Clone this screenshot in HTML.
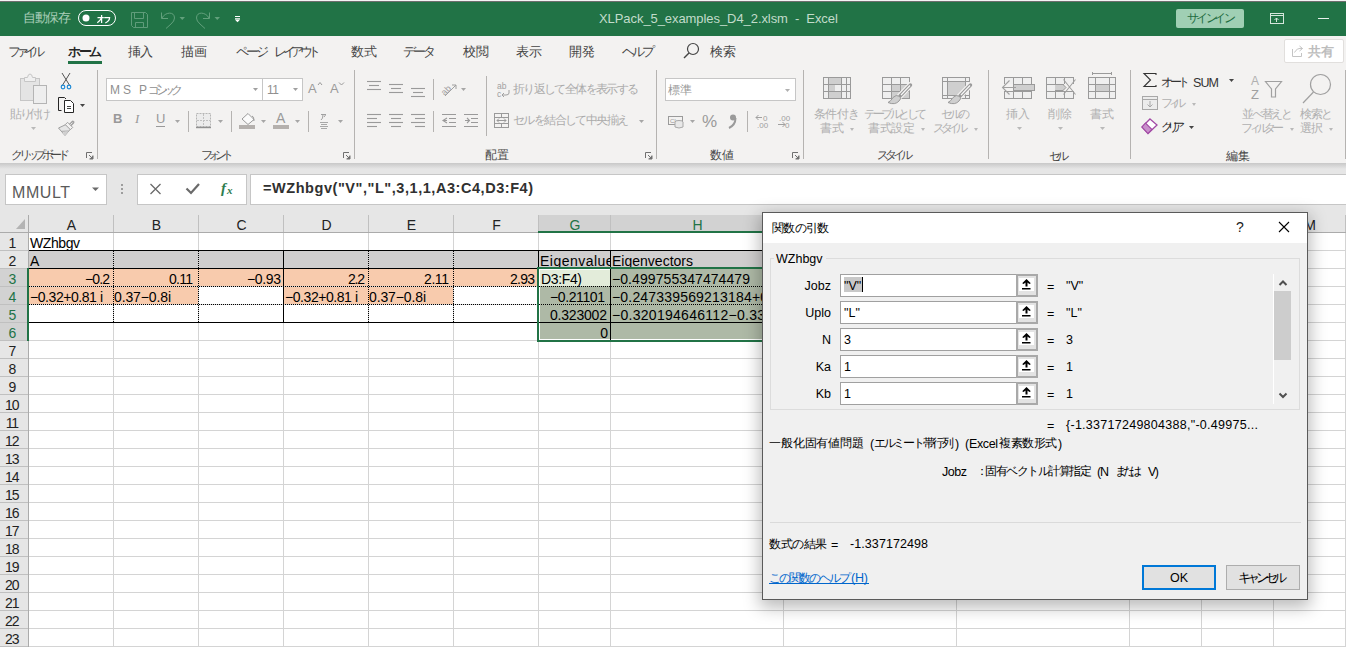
<!DOCTYPE html>
<html><head><meta charset="utf-8">
<style>
*{box-sizing:border-box;margin:0;padding:0}
html,body{width:1346px;height:647px;overflow:hidden;background:#fff;font-family:"Liberation Sans",sans-serif;position:relative}
.a{position:absolute}
.t{position:absolute;white-space:nowrap;line-height:1}
svg{position:absolute;overflow:visible}
</style></head><body>
<div class="a" style="left:29px;top:233px;width:1317px;height:414px;background:#fff"></div>
<div class="a" style="left:29px;top:250px;width:1317px;height:1px;background:#d4d4d4"></div>
<div class="a" style="left:29px;top:268px;width:1317px;height:1px;background:#d4d4d4"></div>
<div class="a" style="left:29px;top:286px;width:1317px;height:1px;background:#d4d4d4"></div>
<div class="a" style="left:29px;top:304px;width:1317px;height:1px;background:#d4d4d4"></div>
<div class="a" style="left:29px;top:322px;width:1317px;height:1px;background:#d4d4d4"></div>
<div class="a" style="left:29px;top:340px;width:1317px;height:1px;background:#d4d4d4"></div>
<div class="a" style="left:29px;top:358px;width:1317px;height:1px;background:#d4d4d4"></div>
<div class="a" style="left:29px;top:376px;width:1317px;height:1px;background:#d4d4d4"></div>
<div class="a" style="left:29px;top:394px;width:1317px;height:1px;background:#d4d4d4"></div>
<div class="a" style="left:29px;top:412px;width:1317px;height:1px;background:#d4d4d4"></div>
<div class="a" style="left:29px;top:430px;width:1317px;height:1px;background:#d4d4d4"></div>
<div class="a" style="left:29px;top:448px;width:1317px;height:1px;background:#d4d4d4"></div>
<div class="a" style="left:29px;top:466px;width:1317px;height:1px;background:#d4d4d4"></div>
<div class="a" style="left:29px;top:484px;width:1317px;height:1px;background:#d4d4d4"></div>
<div class="a" style="left:29px;top:502px;width:1317px;height:1px;background:#d4d4d4"></div>
<div class="a" style="left:29px;top:520px;width:1317px;height:1px;background:#d4d4d4"></div>
<div class="a" style="left:29px;top:538px;width:1317px;height:1px;background:#d4d4d4"></div>
<div class="a" style="left:29px;top:556px;width:1317px;height:1px;background:#d4d4d4"></div>
<div class="a" style="left:29px;top:574px;width:1317px;height:1px;background:#d4d4d4"></div>
<div class="a" style="left:29px;top:592px;width:1317px;height:1px;background:#d4d4d4"></div>
<div class="a" style="left:29px;top:610px;width:1317px;height:1px;background:#d4d4d4"></div>
<div class="a" style="left:29px;top:628px;width:1317px;height:1px;background:#d4d4d4"></div>
<div class="a" style="left:29px;top:646px;width:1317px;height:1px;background:#d4d4d4"></div>
<div class="a" style="left:113px;top:233px;width:1px;height:414px;background:#d4d4d4"></div>
<div class="a" style="left:198px;top:233px;width:1px;height:414px;background:#d4d4d4"></div>
<div class="a" style="left:283px;top:233px;width:1px;height:414px;background:#d4d4d4"></div>
<div class="a" style="left:368px;top:233px;width:1px;height:414px;background:#d4d4d4"></div>
<div class="a" style="left:453px;top:233px;width:1px;height:414px;background:#d4d4d4"></div>
<div class="a" style="left:538px;top:233px;width:1px;height:414px;background:#d4d4d4"></div>
<div class="a" style="left:610px;top:233px;width:1px;height:414px;background:#d4d4d4"></div>
<div class="a" style="left:783px;top:233px;width:1px;height:414px;background:#d4d4d4"></div>
<div class="a" style="left:956px;top:233px;width:1px;height:414px;background:#d4d4d4"></div>
<div class="a" style="left:1129px;top:233px;width:1px;height:414px;background:#d4d4d4"></div>
<div class="a" style="left:1201px;top:233px;width:1px;height:414px;background:#d4d4d4"></div>
<div class="a" style="left:1273px;top:233px;width:1px;height:414px;background:#d4d4d4"></div>
<div class="a" style="left:1345px;top:233px;width:1px;height:414px;background:#d4d4d4"></div>
<div class="a" style="left:29px;top:251px;width:509px;height:17px;background:#d0cece"></div>
<div class="a" style="left:539px;top:251px;width:244px;height:17px;background:#d0cece"></div>
<div class="a" style="left:29px;top:269px;width:509px;height:17px;background:#f8cbad"></div>
<div class="a" style="left:29px;top:287px;width:169px;height:17px;background:#f8cbad"></div>
<div class="a" style="left:284px;top:287px;width:169px;height:17px;background:#f8cbad"></div>
<div class="a" style="left:539px;top:269px;width:244px;height:72px;background:#aeb9a6"></div>
<div class="a" style="left:539px;top:269px;width:71px;height:17px;background:#e3ecda;border-left:1px solid #fff;border-top:1px solid #fff"></div>
<div class="a" style="left:539px;top:339px;width:244px;height:1px;background:#fff"></div>
<div class="a" style="left:539px;top:286px;width:1px;height:54px;background:#fff"></div>
<div class="a" style="left:28px;top:250px;width:755px;height:1px;background:#000"></div>
<div class="a" style="left:28px;top:268px;width:755px;height:1px;background:#000"></div>
<div class="a" style="left:28px;top:322px;width:755px;height:1px;background:#000"></div>
<div class="a" style="left:283px;top:250px;width:1px;height:73px;background:#000"></div>
<div class="a" style="left:538px;top:250px;width:1px;height:91px;background:#000"></div>
<div class="a" style="left:610px;top:250px;width:1px;height:91px;background:#000"></div>
<div class="a" style="left:29px;top:286px;width:509px;height:1px;background:repeating-linear-gradient(90deg,#000 0 1px,transparent 1px 2px)"></div>
<div class="a" style="left:29px;top:304px;width:509px;height:1px;background:repeating-linear-gradient(90deg,#000 0 1px,transparent 1px 2px)"></div>
<div class="a" style="left:539px;top:286px;width:244px;height:1px;background:repeating-linear-gradient(90deg,#000 0 1px,transparent 1px 2px)"></div>
<div class="a" style="left:539px;top:304px;width:244px;height:1px;background:repeating-linear-gradient(90deg,#000 0 1px,transparent 1px 2px)"></div>
<div class="a" style="left:113px;top:251px;width:1px;height:71px;background:repeating-linear-gradient(180deg,#000 0 1px,transparent 1px 2px)"></div>
<div class="a" style="left:198px;top:251px;width:1px;height:71px;background:repeating-linear-gradient(180deg,#000 0 1px,transparent 1px 2px)"></div>
<div class="a" style="left:368px;top:251px;width:1px;height:71px;background:repeating-linear-gradient(180deg,#000 0 1px,transparent 1px 2px)"></div>
<div class="a" style="left:453px;top:251px;width:1px;height:71px;background:repeating-linear-gradient(180deg,#000 0 1px,transparent 1px 2px)"></div>
<div class="t" style="left:30px;top:236px;font-size:14px;color:#000;letter-spacing:-0.42px">WZhbgv</div>
<div class="t" style="left:30px;top:254px;font-size:14px;color:#000;letter-spacing:0.00px">A</div>
<div class="t" style="left:-90.88px;top:272px;width:200px;text-align:right;font-size:14px;color:#000;letter-spacing:-0.88px">−0.2</div>
<div class="t" style="left:-7.74px;top:272px;width:200px;text-align:right;font-size:14px;color:#000;letter-spacing:-0.74px">0.11</div>
<div class="t" style="left:80.64px;top:272px;width:200px;text-align:right;font-size:14px;color:#000;letter-spacing:-0.36px">−0.93</div>
<div class="t" style="left:163.77px;top:272px;width:200px;text-align:right;font-size:14px;color:#000;letter-spacing:-1.23px">2.2</div>
<div class="t" style="left:248.59px;top:272px;width:200px;text-align:right;font-size:14px;color:#000;letter-spacing:-0.41px">2.11</div>
<div class="t" style="left:334.25px;top:272px;width:200px;text-align:right;font-size:14px;color:#000;letter-spacing:-0.75px">2.93</div>
<div class="t" style="left:30px;top:290px;font-size:14px;color:#000;letter-spacing:-0.44px">−0.32+0.81 i</div>
<div class="t" style="left:114px;top:290px;font-size:14px;color:#000;letter-spacing:-0.12px">0.37−0.8i</div>
<div class="t" style="left:285px;top:290px;font-size:14px;color:#000;letter-spacing:-0.44px">−0.32+0.81 i</div>
<div class="t" style="left:369px;top:290px;font-size:14px;color:#000;letter-spacing:-0.12px">0.37−0.8i</div>
<div class="a" style="left:540px;top:251px;width:70px;height:17px;overflow:hidden"><div class="t" style="left:0px;top:3px;font-size:14px;color:#000;letter-spacing:0.47px">Eigenvalues</div></div>
<div class="a" style="left:612px;top:251px;width:171px;height:17px;overflow:hidden"><div class="t" style="left:0px;top:3px;font-size:14px;color:#000;letter-spacing:0.01px">Eigenvectors</div></div>
<div class="t" style="left:541px;top:272px;font-size:14px;color:#000;letter-spacing:-0.36px">D3:F4)</div>
<div class="t" style="left:404.61px;top:290px;width:200px;text-align:right;font-size:14px;color:#000;letter-spacing:-0.39px">−0.21101</div>
<div class="t" style="left:406.80px;top:308px;width:200px;text-align:right;font-size:14px;color:#000;letter-spacing:-0.20px">0.323002</div>
<div class="t" style="left:408.00px;top:326px;width:200px;text-align:right;font-size:14px;color:#000;letter-spacing:0.00px">0</div>
<div class="t" style="left:612px;top:272px;font-size:14px;color:#000;letter-spacing:0.08px">−0.499755347474479</div>
<div class="a" style="left:612px;top:287px;width:171px;height:17px;overflow:hidden"><div class="t" style="left:0px;top:3px;font-size:14px;color:#000;letter-spacing:0.18px">−0.247339569213184+0.339</div></div>
<div class="a" style="left:612px;top:305px;width:171px;height:17px;overflow:hidden"><div class="t" style="left:0px;top:3px;font-size:14px;color:#000;letter-spacing:0.28px">−0.320194646112−0.338</div></div>
<div class="a" style="left:537px;top:267px;width:247px;height:2px;background:#217346"></div>
<div class="a" style="left:537px;top:340px;width:247px;height:2px;background:#217346"></div>
<div class="a" style="left:537px;top:267px;width:2px;height:75px;background:#217346"></div>
<div class="a" style="left:0px;top:215px;width:1346px;height:18px;background:#e6e6e6"></div>
<div class="a" style="left:538px;top:215px;width:245px;height:17px;background:#d2d2d2"></div>
<div class="a" style="left:0px;top:233px;width:28px;height:414px;background:#e6e6e6"></div>
<div class="a" style="left:0px;top:269px;width:28px;height:72px;background:#d2d2d2"></div>
<div class="a" style="left:0px;top:250px;width:28px;height:1px;background:#c0c0c0"></div>
<div class="a" style="left:0px;top:268px;width:28px;height:1px;background:#c0c0c0"></div>
<div class="a" style="left:0px;top:286px;width:28px;height:1px;background:#c0c0c0"></div>
<div class="a" style="left:0px;top:304px;width:28px;height:1px;background:#c0c0c0"></div>
<div class="a" style="left:0px;top:322px;width:28px;height:1px;background:#c0c0c0"></div>
<div class="a" style="left:0px;top:340px;width:28px;height:1px;background:#c0c0c0"></div>
<div class="a" style="left:0px;top:358px;width:28px;height:1px;background:#c0c0c0"></div>
<div class="a" style="left:0px;top:376px;width:28px;height:1px;background:#c0c0c0"></div>
<div class="a" style="left:0px;top:394px;width:28px;height:1px;background:#c0c0c0"></div>
<div class="a" style="left:0px;top:412px;width:28px;height:1px;background:#c0c0c0"></div>
<div class="a" style="left:0px;top:430px;width:28px;height:1px;background:#c0c0c0"></div>
<div class="a" style="left:0px;top:448px;width:28px;height:1px;background:#c0c0c0"></div>
<div class="a" style="left:0px;top:466px;width:28px;height:1px;background:#c0c0c0"></div>
<div class="a" style="left:0px;top:484px;width:28px;height:1px;background:#c0c0c0"></div>
<div class="a" style="left:0px;top:502px;width:28px;height:1px;background:#c0c0c0"></div>
<div class="a" style="left:0px;top:520px;width:28px;height:1px;background:#c0c0c0"></div>
<div class="a" style="left:0px;top:538px;width:28px;height:1px;background:#c0c0c0"></div>
<div class="a" style="left:0px;top:556px;width:28px;height:1px;background:#c0c0c0"></div>
<div class="a" style="left:0px;top:574px;width:28px;height:1px;background:#c0c0c0"></div>
<div class="a" style="left:0px;top:592px;width:28px;height:1px;background:#c0c0c0"></div>
<div class="a" style="left:0px;top:610px;width:28px;height:1px;background:#c0c0c0"></div>
<div class="a" style="left:0px;top:628px;width:28px;height:1px;background:#c0c0c0"></div>
<div class="a" style="left:0px;top:646px;width:28px;height:1px;background:#c0c0c0"></div>
<div class="a" style="left:113px;top:215px;width:1px;height:17px;background:#c0c0c0"></div>
<div class="a" style="left:198px;top:215px;width:1px;height:17px;background:#c0c0c0"></div>
<div class="a" style="left:283px;top:215px;width:1px;height:17px;background:#c0c0c0"></div>
<div class="a" style="left:368px;top:215px;width:1px;height:17px;background:#c0c0c0"></div>
<div class="a" style="left:453px;top:215px;width:1px;height:17px;background:#c0c0c0"></div>
<div class="a" style="left:538px;top:215px;width:1px;height:17px;background:#c0c0c0"></div>
<div class="a" style="left:610px;top:215px;width:1px;height:17px;background:#c0c0c0"></div>
<div class="a" style="left:783px;top:215px;width:1px;height:17px;background:#c0c0c0"></div>
<div class="a" style="left:956px;top:215px;width:1px;height:17px;background:#c0c0c0"></div>
<div class="a" style="left:1129px;top:215px;width:1px;height:17px;background:#c0c0c0"></div>
<div class="a" style="left:1201px;top:215px;width:1px;height:17px;background:#c0c0c0"></div>
<div class="a" style="left:1273px;top:215px;width:1px;height:17px;background:#c0c0c0"></div>
<div class="a" style="left:1345px;top:215px;width:1px;height:17px;background:#c0c0c0"></div>
<div class="a" style="left:0px;top:232px;width:1346px;height:1px;background:#ababab"></div>
<div class="a" style="left:28px;top:215px;width:1px;height:432px;background:#ababab"></div>
<svg style="left:0px;top:0px" width="1" height="1"><path d="M16 229 L25 229 L25 219 Z" fill="#b4b4b4"/></svg>
<div class="t" style="left:29px;top:218px;width:85px;text-align:center;font-size:14px;color:#222">A</div>
<div class="t" style="left:114px;top:218px;width:85px;text-align:center;font-size:14px;color:#222">B</div>
<div class="t" style="left:199px;top:218px;width:85px;text-align:center;font-size:14px;color:#222">C</div>
<div class="t" style="left:284px;top:218px;width:85px;text-align:center;font-size:14px;color:#222">D</div>
<div class="t" style="left:369px;top:218px;width:85px;text-align:center;font-size:14px;color:#222">E</div>
<div class="t" style="left:454px;top:218px;width:85px;text-align:center;font-size:14px;color:#222">F</div>
<div class="t" style="left:539px;top:218px;width:72px;text-align:center;font-size:14px;color:#217346">G</div>
<div class="t" style="left:611px;top:218px;width:173px;text-align:center;font-size:14px;color:#217346">H</div>
<div class="t" style="left:784px;top:218px;width:173px;text-align:center;font-size:14px;color:#222">I</div>
<div class="t" style="left:957px;top:218px;width:173px;text-align:center;font-size:14px;color:#222">J</div>
<div class="t" style="left:1130px;top:218px;width:72px;text-align:center;font-size:14px;color:#222">K</div>
<div class="t" style="left:1202px;top:218px;width:72px;text-align:center;font-size:14px;color:#222">L</div>
<div class="t" style="left:1274px;top:218px;width:72px;text-align:center;font-size:14px;color:#222">M</div>
<div class="a" style="left:538px;top:231px;width:245px;height:2px;background:#217346"></div>
<div class="t" style="left:-2px;top:236px;width:28px;text-align:center;font-size:14px;letter-spacing:-1.2px;text-indent:-0.6px;color:#222">1</div>
<div class="t" style="left:-2px;top:254px;width:28px;text-align:center;font-size:14px;letter-spacing:-1.2px;text-indent:-0.6px;color:#222">2</div>
<div class="t" style="left:-2px;top:272px;width:28px;text-align:center;font-size:14px;letter-spacing:-1.2px;text-indent:-0.6px;color:#217346">3</div>
<div class="t" style="left:-2px;top:290px;width:28px;text-align:center;font-size:14px;letter-spacing:-1.2px;text-indent:-0.6px;color:#217346">4</div>
<div class="t" style="left:-2px;top:308px;width:28px;text-align:center;font-size:14px;letter-spacing:-1.2px;text-indent:-0.6px;color:#217346">5</div>
<div class="t" style="left:-2px;top:326px;width:28px;text-align:center;font-size:14px;letter-spacing:-1.2px;text-indent:-0.6px;color:#217346">6</div>
<div class="t" style="left:-2px;top:344px;width:28px;text-align:center;font-size:14px;letter-spacing:-1.2px;text-indent:-0.6px;color:#222">7</div>
<div class="t" style="left:-2px;top:362px;width:28px;text-align:center;font-size:14px;letter-spacing:-1.2px;text-indent:-0.6px;color:#222">8</div>
<div class="t" style="left:-2px;top:380px;width:28px;text-align:center;font-size:14px;letter-spacing:-1.2px;text-indent:-0.6px;color:#222">9</div>
<div class="t" style="left:-2px;top:398px;width:28px;text-align:center;font-size:14px;letter-spacing:-1.2px;text-indent:-0.6px;color:#222">10</div>
<div class="t" style="left:-2px;top:416px;width:28px;text-align:center;font-size:14px;letter-spacing:-1.2px;text-indent:-0.6px;color:#222">11</div>
<div class="t" style="left:-2px;top:434px;width:28px;text-align:center;font-size:14px;letter-spacing:-1.2px;text-indent:-0.6px;color:#222">12</div>
<div class="t" style="left:-2px;top:452px;width:28px;text-align:center;font-size:14px;letter-spacing:-1.2px;text-indent:-0.6px;color:#222">13</div>
<div class="t" style="left:-2px;top:470px;width:28px;text-align:center;font-size:14px;letter-spacing:-1.2px;text-indent:-0.6px;color:#222">14</div>
<div class="t" style="left:-2px;top:488px;width:28px;text-align:center;font-size:14px;letter-spacing:-1.2px;text-indent:-0.6px;color:#222">15</div>
<div class="t" style="left:-2px;top:506px;width:28px;text-align:center;font-size:14px;letter-spacing:-1.2px;text-indent:-0.6px;color:#222">16</div>
<div class="t" style="left:-2px;top:524px;width:28px;text-align:center;font-size:14px;letter-spacing:-1.2px;text-indent:-0.6px;color:#222">17</div>
<div class="t" style="left:-2px;top:542px;width:28px;text-align:center;font-size:14px;letter-spacing:-1.2px;text-indent:-0.6px;color:#222">18</div>
<div class="t" style="left:-2px;top:560px;width:28px;text-align:center;font-size:14px;letter-spacing:-1.2px;text-indent:-0.6px;color:#222">19</div>
<div class="t" style="left:-2px;top:578px;width:28px;text-align:center;font-size:14px;letter-spacing:-1.2px;text-indent:-0.6px;color:#222">20</div>
<div class="t" style="left:-2px;top:596px;width:28px;text-align:center;font-size:14px;letter-spacing:-1.2px;text-indent:-0.6px;color:#222">21</div>
<div class="t" style="left:-2px;top:614px;width:28px;text-align:center;font-size:14px;letter-spacing:-1.2px;text-indent:-0.6px;color:#222">22</div>
<div class="t" style="left:-2px;top:632px;width:28px;text-align:center;font-size:14px;letter-spacing:-1.2px;text-indent:-0.6px;color:#222">23</div>
<div class="a" style="left:27px;top:268px;width:2px;height:73px;background:#217346"></div>
<div class="a" style="left:0px;top:163px;width:1346px;height:52px;background:#e6e6e6"></div>
<div class="a" style="left:0px;top:163px;width:1346px;height:6px;background:linear-gradient(#c8c8c8,#e6e6e6)"></div>
<div class="a" style="left:5px;top:174px;width:102px;height:31px;background:#fff;border:1px solid #c6c6c6"></div>
<div class="t" style="left:12px;top:185px;font-size:16px;color:#5a5a5a;letter-spacing:0.57px;">MMULT</div>
<svg style="left:0px;top:0px" width="1" height="1"><path d="M92 187.5 H99 L95.5 191 Z" fill="#6a6a6a"/></svg>
<svg style="left:0px;top:0px" width="1" height="1"><rect x="121" y="184" width="2" height="2" fill="#9d9d9d"/><rect x="121" y="188" width="2" height="2" fill="#9d9d9d"/><rect x="121" y="192" width="2" height="2" fill="#9d9d9d"/></svg>
<div class="a" style="left:137px;top:174px;width:110px;height:31px;background:#fff;border:1px solid #c6c6c6"></div>
<svg style="left:0px;top:0px" width="1" height="1"><path d="M150.5 184 L160.5 194 M160.5 184 L150.5 194" stroke="#6a6a6a" stroke-width="1.3"/></svg>
<svg style="left:0px;top:0px" width="1" height="1"><path d="M186.5 188.5 L191 193 L199 184" fill="none" stroke="#6a6a6a" stroke-width="2.2"/></svg>
<div class="t" style="left:221px;top:181px;font-size:15px;color:#2d7d4f;font-weight:bold;font-family:'Liberation Serif',serif;font-style:italic">f</div>
<div class="t" style="left:227px;top:185px;font-size:11px;color:#2d7d4f;font-weight:bold;font-family:'Liberation Serif',serif;font-style:italic">x</div>
<div class="a" style="left:250px;top:174px;width:1100px;height:31px;background:#fff;border:1px solid #c6c6c6"></div>
<div class="t" style="left:263px;top:181px;font-size:14.5px;color:#303030;font-weight:bold;letter-spacing:0.55px;">=WZhbgv(&quot;V&quot;,&quot;L&quot;,3,1,1,A3:C4,D3:F4)</div>
<div class="a" style="left:0px;top:36px;width:1346px;height:127px;background:#f3f2f1"></div>
<div class="t" style="left:8px;top:46px;font-size:12.5px;color:#444444;letter-spacing:-5.00px;">ファイル</div>
<div class="t" style="left:68px;top:46px;font-size:12.5px;color:#262626;font-weight:bold;letter-spacing:-2.50px;">ホーム</div>
<div class="t" style="left:128px;top:46px;font-size:12.5px;color:#444444;letter-spacing:-1.00px;">挿入</div>
<div class="t" style="left:181px;top:46px;font-size:12.5px;color:#444444;">描画</div>
<div class="t" style="left:236px;top:46px;font-size:12.5px;color:#444444;letter-spacing:-3.00px;">ページ</div>
<div class="t" style="left:274px;top:46px;font-size:12.5px;color:#444444;letter-spacing:-4.50px;">レイアウト</div>
<div class="t" style="left:351px;top:46px;font-size:12.5px;color:#444444;">数式</div>
<div class="t" style="left:403px;top:46px;font-size:12.5px;color:#444444;letter-spacing:-3.00px;">データ</div>
<div class="t" style="left:463px;top:46px;font-size:12.5px;color:#444444;">校閲</div>
<div class="t" style="left:516px;top:46px;font-size:12.5px;color:#444444;">表示</div>
<div class="t" style="left:569px;top:46px;font-size:12.5px;color:#444444;">開発</div>
<div class="t" style="left:622px;top:46px;font-size:12.5px;color:#444444;letter-spacing:-3.00px;">ヘルプ</div>
<div class="t" style="left:710px;top:46px;font-size:12.5px;color:#444444;">検索</div>
<div class="a" style="left:68px;top:61px;width:34px;height:3px;background:#217346"></div>
<svg style="left:0px;top:0px" width="1" height="1"><circle cx="693" cy="49" r="5.5" fill="none" stroke="#444" stroke-width="1.2"/><path d="M689 53 L684 58" stroke="#444" stroke-width="1.4"/></svg>
<div class="a" style="left:1284px;top:39px;width:60px;height:24px;background:#fff;border:1px solid #e1dfdd;border-radius:2px"></div>
<svg style="left:0px;top:0px" width="1" height="1"><path d="M1292.5 49 V56.5 H1301.5 V53" fill="none" stroke="#c4c4c4"/><path d="M1294.5 52.5 Q1297 47.5 1302.5 48.5 M1299.5 46 L1302.5 48.5 L1299.5 51" fill="none" stroke="#c4c4c4"/></svg>
<div class="t" style="left:1308px;top:46px;font-size:12.5px;color:#bdbdbd;font-weight:bold;">共有</div>
<svg style="left:0px;top:0px" width="1" height="1"><rect x="20.5" y="78.5" width="19" height="22" fill="#e4e4e4" stroke="#c6c6c6"/><path d="M24.5 81.5 V77.5 H27.5 Q28 74 30 74 Q32 74 32.5 77.5 H35.5 V81.5 Z" fill="#f0f0f0" stroke="#c6c6c6"/><rect x="33.5" y="85.5" width="13" height="18" fill="#eeeeee" stroke="#b4b4b4"/></svg>
<div class="t" style="left:10px;top:108px;font-size:12px;color:#b0b0b0;letter-spacing:-2.33px;">貼り付け</div>
<svg style="left:0px;top:0px" width="1" height="1"><path d="M31 127 H36 L33.5 130 Z" fill="#b9b9b9"/></svg>
<svg style="left:0px;top:0px" width="1" height="1"><path d="M62 73 L70 86 M70 73 L62 86" stroke="#555" stroke-width="1"/><circle cx="63" cy="87" r="1.8" fill="none" stroke="#1e8ad6" stroke-width="1.2"/><circle cx="69" cy="87" r="1.8" fill="none" stroke="#1e8ad6" stroke-width="1.2"/></svg>
<svg style="left:0px;top:0px" width="1" height="1"><path d="M61.5 110.5 H58.5 V97.5 H64.5 L66 99" fill="none" stroke="#262626"/><path d="M64.5 100.5 H70.5 L73.5 103.5 V112.5 H64.5 Z" fill="#fff" stroke="#262626"/><path d="M67 106.5 H71 M67 108.5 H71" stroke="#444"/></svg>
<svg style="left:0px;top:0px" width="1" height="1"><path d="M80 104 H85 L82.5 107 Z" fill="#444"/></svg>
<svg style="left:0px;top:0px" width="1" height="1"><path d="M72.8 122.3 L69.8 125.3" stroke="#a0a0a0" stroke-width="3.2" stroke-linecap="round"/><path d="M72.6 122.5 L70 125.1" stroke="#f3f2f1" stroke-width="1"/><path d="M66 124.5 L70.5 129 L65 135.5 L58.5 128 Z" fill="#e6e6e6" stroke="#a0a0a0"/><path d="M61.5 131.3 L68.5 131" stroke="#a8a8a8"/><path d="M65.5 131.5 L62 133 L65 135.5 L68.5 131.5 Z" fill="#d0d0d0"/><path d="M65.3 124.6 L67.6 122.3 L72.7 127.4 L70.4 129.7 Z" fill="#f3f2f1" stroke="#a0a0a0"/></svg>
<div class="t" style="left:11px;top:150px;font-size:11.5px;color:#474747;letter-spacing:-4.17px;">クリップボード</div>
<svg style="left:0px;top:0px" width="1" height="1"><path d="M86.5 158 V152.5 H92" fill="none" stroke="#707070"/><path d="M89 155 L93 159 M93 155.5 V159 H89.5" fill="#707070" stroke="#707070"/></svg>
<div class="a" style="left:97px;top:70px;width:1px;height:89px;background:#b5b3b1"></div>
<div class="a" style="left:106px;top:78px;width:157px;height:23px;background:#fff;border:1px solid #c6c6c6"></div>
<div class="t" style="left:110px;top:84px;font-size:12px;color:#8f8f8f;letter-spacing:3.00px;">MS</div>
<div class="t" style="left:139px;top:84px;font-size:12px;color:#8f8f8f;">P</div>
<div class="t" style="left:148px;top:84px;font-size:12px;color:#8f8f8f;letter-spacing:-4.33px;">ゴシック</div>
<svg style="left:0px;top:0px" width="1" height="1"><path d="M253 88 H258 L255.5 91 Z" fill="#a0a0a0"/></svg>
<div class="a" style="left:262px;top:78px;width:41px;height:23px;background:#fff;border:1px solid #c6c6c6"></div>
<div class="t" style="left:267px;top:84px;font-size:12px;color:#8f8f8f;letter-spacing:-0.47px;">11</div>
<svg style="left:0px;top:0px" width="1" height="1"><path d="M293 88 H298 L295.5 91 Z" fill="#a0a0a0"/></svg>
<div class="t" style="left:308px;top:82px;font-size:13px;color:#9a9a9a;">A</div>
<svg style="left:0px;top:0px" width="1" height="1"><path d="M318 85 L320 82.5 L322 85" fill="none" stroke="#9a9a9a"/></svg>
<div class="t" style="left:330px;top:82px;font-size:13px;color:#9a9a9a;">A</div>
<svg style="left:0px;top:0px" width="1" height="1"><path d="M339 82.5 L341.5 85 L344 82.5" fill="none" stroke="#9a9a9a"/></svg>
<div class="t" style="left:113px;top:112px;font-size:13px;color:#999;font-weight:bold;">B</div>
<div class="t" style="left:135px;top:112px;font-size:13px;color:#999;font-family:'Liberation Serif',serif;font-style:italic">I</div>
<div class="t" style="left:156px;top:112px;font-size:13px;color:#999;">U</div>
<div class="a" style="left:156px;top:126px;width:9px;height:1px;background:#999"></div>
<svg style="left:0px;top:0px" width="1" height="1"><path d="M175 120 H180 L177.5 123 Z" fill="#a6a6a6"/></svg>
<div class="a" style="left:188px;top:111px;width:1px;height:21px;background:#b5b3b1"></div>
<svg style="left:0px;top:0px" width="1" height="1"><rect x="196.5" y="113.5" width="14" height="13" fill="#ececec" stroke="#b5b5b5" stroke-dasharray="2 1"/><path d="M203.5 114 V126 M197 120.5 H210" stroke="#c0c0c0" stroke-dasharray="2 1"/><path d="M196 127.5 H211" stroke="#909090" stroke-width="1.4"/></svg>
<svg style="left:0px;top:0px" width="1" height="1"><path d="M218 120 H223 L220.5 123 Z" fill="#a6a6a6"/></svg>
<div class="a" style="left:231px;top:111px;width:1px;height:21px;background:#b5b3b1"></div>
<svg style="left:0px;top:0px" width="1" height="1"><path d="M242 119 L248 113.5 L254 119.5 L248 124.5 Z" fill="#fbfbfb" stroke="#9a9a9a"/><path d="M252 116 Q254 116 254 121" fill="none" stroke="#9a9a9a"/><rect x="239" y="125" width="16" height="4" fill="#b4b0ad"/></svg>
<svg style="left:0px;top:0px" width="1" height="1"><path d="M261 120 H266 L263.5 123 Z" fill="#a6a6a6"/></svg>
<div class="t" style="left:276px;top:111px;font-size:14px;color:#9a9a9a;">A</div>
<div class="a" style="left:273px;top:125px;width:16px;height:4px;background:#b4b0ad"></div>
<svg style="left:0px;top:0px" width="1" height="1"><path d="M295 120 H300 L297.5 123 Z" fill="#a6a6a6"/></svg>
<div class="a" style="left:308px;top:111px;width:1px;height:21px;background:#b5b3b1"></div>
<svg style="left:0px;top:0px" width="1" height="1"><path d="M321 114.5 H326 M323 114.5 Q323 119 321 120 M325.5 115 L324 117" fill="none" stroke="#a0a0a0"/><path d="M320 122.5 H328 M321 124.5 H327 M320 126.5 H328 M321 128.5 H327" stroke="#a8a8a8"/></svg>
<svg style="left:0px;top:0px" width="1" height="1"><path d="M338 120 H343 L340.5 123 Z" fill="#a6a6a6"/></svg>
<div class="t" style="left:201px;top:150px;font-size:11.5px;color:#474747;letter-spacing:-5.00px;">フォント</div>
<svg style="left:0px;top:0px" width="1" height="1"><path d="M343.5 158 V152.5 H349" fill="none" stroke="#707070"/><path d="M346 155 L350 159 M350 155.5 V159 H346.5" fill="#707070" stroke="#707070"/></svg>
<div class="a" style="left:354px;top:70px;width:1px;height:89px;background:#b5b3b1"></div>
<svg style="left:0px;top:0px" width="1" height="1"><path d="M367.0 81.5 H381.0" stroke="#9a9a9a" stroke-width="1.1"/><path d="M369.0 85.5 H379.0" stroke="#9a9a9a" stroke-width="1.1"/><path d="M367.0 89.5 H381.0" stroke="#9a9a9a" stroke-width="1.1"/></svg>
<svg style="left:0px;top:0px" width="1" height="1"><path d="M389.0 84.5 H403.0" stroke="#9a9a9a" stroke-width="1.1"/><path d="M391.0 88.5 H401.0" stroke="#9a9a9a" stroke-width="1.1"/><path d="M389.0 92.5 H403.0" stroke="#9a9a9a" stroke-width="1.1"/></svg>
<svg style="left:0px;top:0px" width="1" height="1"><path d="M411.0 88.5 H425.0" stroke="#9a9a9a" stroke-width="1.1"/><path d="M413.0 92.5 H423.0" stroke="#9a9a9a" stroke-width="1.1"/><path d="M411.0 96.5 H425.0" stroke="#9a9a9a" stroke-width="1.1"/></svg>
<div class="a" style="left:433px;top:79px;width:1px;height:21px;background:#b5b3b1"></div>
<svg style="left:0px;top:0px" width="1" height="1"><text x="440" y="93" font-size="9" fill="#a0a0a0" transform="rotate(-45 446 89)" font-family="Liberation Sans">ab</text><path d="M445 96 L456 85 M452 85 H456 V89" fill="none" stroke="#a0a0a0"/></svg>
<svg style="left:0px;top:0px" width="1" height="1"><path d="M461 88 H466 L463.5 91 Z" fill="#a6a6a6"/></svg>
<div class="a" style="left:486px;top:76px;width:1px;height:60px;background:#b5b3b1"></div>
<svg style="left:0px;top:0px" width="1" height="1"><text x="497" y="89" font-size="8.5" fill="#a0a0a0" font-family="Liberation Sans">ab</text><text x="497" y="97" font-size="8.5" fill="#a0a0a0" font-family="Liberation Sans">c</text><path d="M509 90 V93 Q509 95 506 95 H502 M504 93 L502 95 L504 97" fill="none" stroke="#a0a0a0"/></svg>
<div class="t" style="left:513px;top:84px;font-size:11.5px;color:#ababab;letter-spacing:-1.64px;">折り返して全体を表示する</div>
<svg style="left:0px;top:0px" width="1" height="1"><path d="M367 114.5 H381" stroke="#9a9a9a" stroke-width="1.1"/><path d="M367 118.5 H377" stroke="#9a9a9a" stroke-width="1.1"/><path d="M367 122.5 H381" stroke="#9a9a9a" stroke-width="1.1"/><path d="M367 126.5 H377" stroke="#9a9a9a" stroke-width="1.1"/></svg>
<svg style="left:0px;top:0px" width="1" height="1"><path d="M389.0 114.5 H403.0" stroke="#9a9a9a" stroke-width="1.1"/><path d="M391.0 118.5 H401.0" stroke="#9a9a9a" stroke-width="1.1"/><path d="M389.0 122.5 H403.0" stroke="#9a9a9a" stroke-width="1.1"/><path d="M391.0 126.5 H401.0" stroke="#9a9a9a" stroke-width="1.1"/></svg>
<svg style="left:0px;top:0px" width="1" height="1"><path d="M411 114.5 H425" stroke="#9a9a9a" stroke-width="1.1"/><path d="M415 118.5 H425" stroke="#9a9a9a" stroke-width="1.1"/><path d="M411 122.5 H425" stroke="#9a9a9a" stroke-width="1.1"/><path d="M415 126.5 H425" stroke="#9a9a9a" stroke-width="1.1"/></svg>
<div class="a" style="left:433px;top:111px;width:1px;height:21px;background:#b5b3b1"></div>
<svg style="left:0px;top:0px" width="1" height="1"><path d="M442 114.5 H456 M449 118.5 H456 M449 122.5 H456 M442 126.5 H456 M447 118 L443 120.5 L447 123 M443 120.5 H447" fill="none" stroke="#9a9a9a" stroke-width="1.1"/></svg>
<svg style="left:0px;top:0px" width="1" height="1"><path d="M464 114.5 H478 M471 118.5 H478 M471 122.5 H478 M464 126.5 H478 M465 120.5 H469 M467 118 L469.5 120.5 L467 123" fill="none" stroke="#9a9a9a" stroke-width="1.1"/></svg>
<svg style="left:0px;top:0px" width="1" height="1"><rect x="494.5" y="113.5" width="14" height="14" fill="#f3f2f1" stroke="#9a9a9a"/><path d="M495 117.5 H508 M495 123.5 H508 M501.5 114 V117 M501.5 124 V127 M497 120.5 H506 M499 118.5 L497 120.5 L499 122.5 M504 118.5 L506 120.5 L504 122.5" fill="none" stroke="#9a9a9a"/></svg>
<div class="t" style="left:513px;top:115px;font-size:11.5px;color:#ababab;letter-spacing:-1.60px;">セルを結合して中央揃え</div>
<svg style="left:0px;top:0px" width="1" height="1"><path d="M639 120 H644 L641.5 123 Z" fill="#a6a6a6"/></svg>
<div class="t" style="left:485px;top:149px;font-size:12px;color:#474747;">配置</div>
<svg style="left:0px;top:0px" width="1" height="1"><path d="M645.5 158 V152.5 H651" fill="none" stroke="#707070"/><path d="M648 155 L652 159 M652 155.5 V159 H648.5" fill="#707070" stroke="#707070"/></svg>
<div class="a" style="left:656px;top:70px;width:1px;height:89px;background:#b5b3b1"></div>
<div class="a" style="left:665px;top:78px;width:131px;height:23px;background:#fff;border:1px solid #c6c6c6"></div>
<div class="t" style="left:668px;top:84px;font-size:12px;color:#9a9a9a;">標準</div>
<svg style="left:0px;top:0px" width="1" height="1"><path d="M785 89 H790 L787.5 92 Z" fill="#b0b0b0"/></svg>
<svg style="left:0px;top:0px" width="1" height="1"><rect x="668.5" y="116.5" width="14" height="8" fill="none" stroke="#9a9a9a"/><text x="670" y="123" font-size="6" fill="#9a9a9a" font-family="Liberation Sans">CI</text><ellipse cx="679" cy="122" rx="4" ry="1.5" fill="#e8e8e8" stroke="#a8a8a8"/><path d="M675 122 V127 Q679 129 683 127 V122" fill="#e8e8e8" stroke="#a8a8a8"/></svg>
<svg style="left:0px;top:0px" width="1" height="1"><path d="M690 120 H695 L692.5 123 Z" fill="#a6a6a6"/></svg>
<div class="t" style="left:702px;top:113px;font-size:17px;color:#9a9a9a;">%</div>
<svg style="left:0px;top:0px" width="1" height="1"><circle cx="733" cy="117.5" r="3" fill="#9a9a9a"/><path d="M735.5 118 Q735.5 125 729 128" fill="none" stroke="#9a9a9a" stroke-width="2"/></svg>
<div class="a" style="left:747px;top:111px;width:1px;height:21px;background:#b5b3b1"></div>
<svg style="left:0px;top:0px" width="1" height="1"><path d="M762 117.5 H756 M758.5 115 L756 117.5 L758.5 120" fill="none" stroke="#a0a0a0"/><text x="763" y="121" font-size="8" fill="#a0a0a0" font-family="Liberation Sans">0</text><text x="757" y="128" font-size="8" fill="#a0a0a0" font-family="Liberation Sans">.00</text></svg>
<svg style="left:0px;top:0px" width="1" height="1"><text x="779" y="121" font-size="8" fill="#a0a0a0" font-family="Liberation Sans">.00</text><text x="785" y="128" font-size="8" fill="#a0a0a0" font-family="Liberation Sans">0</text><path d="M778 124.5 H785 M782.5 122 L785 124.5 L782.5 127" fill="none" stroke="#a0a0a0"/></svg>
<div class="t" style="left:710px;top:149px;font-size:12px;color:#474747;">数値</div>
<svg style="left:0px;top:0px" width="1" height="1"><path d="M792.5 158 V152.5 H798" fill="none" stroke="#707070"/><path d="M795 155 L799 159 M799 155.5 V159 H795.5" fill="#707070" stroke="#707070"/></svg>
<div class="a" style="left:803px;top:70px;width:1px;height:89px;background:#b5b3b1"></div>
<svg style="left:0px;top:0px" width="1" height="1"><rect x="823.5" y="77.5" width="27" height="21" fill="#efefef" stroke="#9a9a9a"/><rect x="829" y="78" width="12" height="6" fill="#cfcfcf"/><rect x="829" y="85" width="6" height="6" fill="#cfcfcf"/><rect x="829" y="92" width="12" height="6" fill="#cfcfcf"/><path d="M828.5 77 V99" stroke="#9a9a9a"/><path d="M841.5 77 V99" stroke="#9a9a9a"/><path d="M846.5 77 V99" stroke="#9a9a9a"/><path d="M823 84.5 H851" stroke="#9a9a9a"/><path d="M823 91.5 H851" stroke="#9a9a9a"/></svg>
<svg style="left:0px;top:0px" width="1" height="1"><rect x="882.5" y="77.5" width="27" height="21" fill="#efefef" stroke="#9a9a9a"/><rect x="892" y="85" width="17" height="13" fill="#cfcfcf"/><path d="M891.5 77 V99" stroke="#9a9a9a"/><path d="M900.5 77 V99" stroke="#9a9a9a"/><path d="M882 84.5 H910" stroke="#9a9a9a"/><path d="M882 91.5 H910" stroke="#9a9a9a"/><path d="M910.5 85 L899 97" stroke="#f3f2f1" stroke-width="6" stroke-linecap="round"/><path d="M910.5 85 L900 96" stroke="#9a9a9a" stroke-width="3.4" stroke-linecap="round"/><path d="M910 85.5 L901 95" stroke="#f8f8f8" stroke-width="1.2"/><path d="M900 96.5 Q896 94 893 97.5 Q891 101 888 102.5 Q895 105.5 899 101 Q901.5 99 900 96.5 Z" fill="#cfcfcf" stroke="#9a9a9a" stroke-width="1"/></svg>
<svg style="left:0px;top:0px" width="1" height="1"><rect x="942.5" y="77.5" width="27" height="21" fill="#efefef" stroke="#9a9a9a"/><rect x="948" y="82" width="17" height="13" fill="#cfcfcf"/><path d="M947.5 77 V99" stroke="#9a9a9a"/><path d="M965.5 77 V99" stroke="#9a9a9a"/><path d="M942 81.5 H970" stroke="#9a9a9a"/><path d="M942 95.5 H970" stroke="#9a9a9a"/><path d="M970.5 85 L959 97" stroke="#f3f2f1" stroke-width="6" stroke-linecap="round"/><path d="M970.5 85 L960 96" stroke="#9a9a9a" stroke-width="3.4" stroke-linecap="round"/><path d="M970 85.5 L961 95" stroke="#f8f8f8" stroke-width="1.2"/><path d="M960 96.5 Q956 94 953 97.5 Q951 101 948 102.5 Q955 105.5 959 101 Q961.5 99 960 96.5 Z" fill="#cfcfcf" stroke="#9a9a9a" stroke-width="1"/></svg>
<div class="t" style="left:814px;top:108px;font-size:12px;color:#b0b0b0;letter-spacing:-0.67px;">条件付き</div>
<div class="t" style="left:820px;top:122px;font-size:12px;color:#b0b0b0;">書式</div>
<svg style="left:0px;top:0px" width="1" height="1"><path d="M850 128 H854 L852.0 131 Z" fill="#b9b9b9"/></svg>
<div class="t" style="left:864px;top:108px;font-size:12px;color:#b0b0b0;letter-spacing:-3.50px;">テーブルとして</div>
<div class="t" style="left:868px;top:122px;font-size:12px;color:#b0b0b0;letter-spacing:-0.33px;">書式設定</div>
<svg style="left:0px;top:0px" width="1" height="1"><path d="M921 128 H925 L923.0 131 Z" fill="#b9b9b9"/></svg>
<div class="t" style="left:941px;top:108px;font-size:12px;color:#b0b0b0;letter-spacing:-3.50px;">セルの</div>
<div class="t" style="left:933px;top:122px;font-size:12px;color:#b0b0b0;letter-spacing:-4.33px;">スタイル</div>
<svg style="left:0px;top:0px" width="1" height="1"><path d="M974 128 H978 L976.0 131 Z" fill="#b9b9b9"/></svg>
<div class="t" style="left:877px;top:149px;font-size:12px;color:#474747;letter-spacing:-4.00px;">スタイル</div>
<div class="a" style="left:988px;top:70px;width:1px;height:89px;background:#b5b3b1"></div>
<svg style="left:0px;top:0px" width="1" height="1"><rect x="1004.5" y="77.5" width="27" height="21" fill="#efefef" stroke="#9a9a9a"/><rect x="1014" y="85" width="17" height="6" fill="#cfcfcf"/><path d="M1013.5 77 V99" stroke="#9a9a9a"/><path d="M1022.5 77 V99" stroke="#9a9a9a"/><path d="M1004 84.5 H1032" stroke="#9a9a9a"/><path d="M1004 91.5 H1032" stroke="#9a9a9a"/><rect x="1013.5" y="84.5" width="21" height="6" fill="#cfcfcf" stroke="#9a9a9a"/><rect x="1003" y="84" width="10" height="7" fill="#f3f2f1"/><path d="M1003 87.5 H1016 M1009.5 80.5 L1002.5 87.5 L1009.5 94.5" fill="none" stroke="#a0a0a0" stroke-width="1.1"/></svg>
<svg style="left:0px;top:0px" width="1" height="1"><rect x="1046.5" y="77.5" width="27" height="21" fill="#efefef" stroke="#9a9a9a"/><rect x="1056" y="85" width="8" height="6" fill="#cfcfcf"/><path d="M1055.5 77 V99" stroke="#9a9a9a"/><path d="M1064.5 77 V99" stroke="#9a9a9a"/><path d="M1046 84.5 H1074" stroke="#9a9a9a"/><path d="M1046 91.5 H1074" stroke="#9a9a9a"/><rect x="1064" y="84" width="10" height="7" fill="#f3f2f1"/><path d="M1063.5 79.5 L1075.5 94.5 M1075.5 79.5 L1063.5 94.5" stroke="#a0a0a0" stroke-width="1.1"/><path d="M1055 84.5 H1063 L1066 87.5 L1063 90.5 H1055" fill="#cfcfcf" stroke="#9a9a9a"/></svg>
<svg style="left:0px;top:0px" width="1" height="1"><rect x="1088.5" y="77.5" width="27" height="21" fill="#efefef" stroke="#9a9a9a"/><rect x="1096" y="85" width="13" height="6" fill="#cfcfcf"/><path d="M1095.5 77 V99" stroke="#9a9a9a"/><path d="M1109.5 77 V99" stroke="#9a9a9a"/><path d="M1088 84.5 H1116" stroke="#9a9a9a"/><path d="M1088 91.5 H1116" stroke="#9a9a9a"/><path d="M1092.5 72 V75 M1111.5 72 V75 M1092 73.5 H1112" stroke="#9a9a9a"/></svg>
<div class="t" style="left:1006px;top:108px;font-size:12px;color:#b0b0b0;">挿入</div>
<div class="t" style="left:1048px;top:108px;font-size:12px;color:#b0b0b0;">削除</div>
<div class="t" style="left:1090px;top:108px;font-size:12px;color:#b0b0b0;">書式</div>
<svg style="left:0px;top:0px" width="1" height="1"><path d="M1017 127 H1022 L1019.5 130 Z" fill="#b9b9b9"/></svg>
<svg style="left:0px;top:0px" width="1" height="1"><path d="M1058 127 H1063 L1060.5 130 Z" fill="#b9b9b9"/></svg>
<svg style="left:0px;top:0px" width="1" height="1"><path d="M1100 127 H1105 L1102.5 130 Z" fill="#b9b9b9"/></svg>
<div class="t" style="left:1049px;top:150px;font-size:12px;color:#474747;letter-spacing:-4.00px;">セル</div>
<div class="a" style="left:1130px;top:70px;width:1px;height:89px;background:#b5b3b1"></div>
<svg style="left:0px;top:0px" width="1" height="1"><path d="M1156 75 V73.5 H1144 L1150.5 80 L1144 86.5 H1156 V85" fill="none" stroke="#333" stroke-width="1.1"/></svg>
<div class="t" style="left:1161px;top:76px;font-size:12px;color:#333;letter-spacing:-3.50px;">オート</div>
<div class="t" style="left:1193px;top:77px;font-size:12.5px;color:#333;letter-spacing:-0.89px;">SUM</div>
<svg style="left:0px;top:0px" width="1" height="1"><path d="M1229 79 H1234 L1231.5 82 Z" fill="#444"/></svg>
<svg style="left:0px;top:0px" width="1" height="1"><rect x="1142.5" y="96.5" width="15" height="13" fill="#ececec" stroke="#a8a8a8"/><path d="M1143 99.5 H1157" stroke="#a8a8a8"/><path d="M1150 101 V107 M1147.5 104.5 L1150 107 L1152.5 104.5" fill="none" stroke="#a8a8a8"/></svg>
<div class="t" style="left:1161px;top:97px;font-size:12px;color:#b0b0b0;letter-spacing:-5.50px;">フィル</div>
<svg style="left:0px;top:0px" width="1" height="1"><path d="M1192 103 H1196 L1194.0 106 Z" fill="#b9b9b9"/></svg>
<svg style="left:0px;top:0px" width="1" height="1"><path d="M1150 119 L1157 125 L1148 133.5 L1142 127 Z" fill="#fff" stroke="#a24aa5" stroke-width="1.3"/><path d="M1142 127 L1145.5 123 L1152 129.5 L1148 133.5 Z" fill="#c890cb" stroke="#a24aa5" stroke-width="1.1"/></svg>
<div class="t" style="left:1161px;top:121px;font-size:12px;color:#262626;letter-spacing:-6.00px;">クリア</div>
<svg style="left:0px;top:0px" width="1" height="1"><path d="M1189 126 H1194 L1191.5 129 Z" fill="#444"/></svg>
<div class="t" style="left:1251px;top:75px;font-size:12px;color:#b0b0b0;">A</div>
<div class="t" style="left:1251px;top:88px;font-size:13px;color:#a0a0a0;">Z</div>
<svg style="left:0px;top:0px" width="1" height="1"><path d="M1265.5 81.5 H1281.5 L1275.5 89 V97 H1271.5 V89 Z" fill="none" stroke="#a0a0a0" stroke-width="1.2"/></svg>
<div class="t" style="left:1242px;top:108px;font-size:12px;color:#b0b0b0;letter-spacing:-2.25px;">並べ替えと</div>
<div class="t" style="left:1241px;top:122px;font-size:12px;color:#b0b0b0;letter-spacing:-4.25px;">フィルター</div>
<svg style="left:0px;top:0px" width="1" height="1"><path d="M1290 128 H1294 L1292.0 131 Z" fill="#b9b9b9"/></svg>
<svg style="left:0px;top:0px" width="1" height="1"><circle cx="1320.5" cy="84.5" r="10" fill="#f3f2f1" stroke="#a0a0a0" stroke-width="1.2"/><path d="M1313.5 92 L1303 103" stroke="#a0a0a0" stroke-width="1.2"/></svg>
<div class="t" style="left:1300px;top:108px;font-size:12px;color:#b0b0b0;letter-spacing:-1.50px;">検索と</div>
<div class="t" style="left:1300px;top:122px;font-size:12px;color:#b0b0b0;letter-spacing:-1.00px;">選択</div>
<svg style="left:0px;top:0px" width="1" height="1"><path d="M1329 128 H1333 L1331.0 131 Z" fill="#b9b9b9"/></svg>
<div class="t" style="left:1226px;top:150px;font-size:12px;color:#474747;">編集</div>
<div class="a" style="left:1345px;top:70px;width:1px;height:89px;background:#b5b3b1"></div>
<div class="a" style="left:0px;top:0px;width:1346px;height:1px;background:#f4f4f4"></div>
<div class="a" style="left:0px;top:1px;width:1346px;height:1px;background:#6e6e6e"></div>
<div class="a" style="left:0px;top:2px;width:1346px;height:34px;background:#217346"></div>
<div class="t" style="left:23px;top:11px;font-size:13px;color:#a8cdb7;letter-spacing:-1.33px;">自動保存</div>
<div class="a" style="left:78px;top:10px;width:38px;height:16px;border:1.3px solid #fff;border-radius:8px"></div>
<svg style="left:0px;top:0px" width="1" height="1"><circle cx="86" cy="18" r="3.5" fill="#fff"/><path d="M97.5 17.6 H103.8 M101.6 15 V23 M101.4 18 Q100 21 97.3 22.7 M104.2 17.6 H109.6 Q109.6 21.2 105.3 23" fill="none" stroke="#fff" stroke-width="1.25"/></svg>
<svg style="left:0px;top:0px" width="1" height="1"><path d="M131.5 12.5 H145.5 L147.5 14.5 V27.5 H133.5 L131.5 25.5 Z" fill="none" stroke="#5f9c7a" stroke-width="1"/><path d="M134.5 12.5 V18.5 H143.5 V12.5 M135.5 27.5 V22.5 H143.5 V27.5" fill="none" stroke="#5f9c7a" stroke-width="1"/></svg>
<svg style="left:0px;top:0px" width="1" height="1"><path d="M161.5 12.5 V18.5 H168" fill="none" stroke="#62a07c" stroke-width="1"/><path d="M162 18 C165 12 174.5 11 174.5 18 Q174.5 21 171 24 L166 28.5" fill="none" stroke="#62a07c" stroke-width="1"/><path d="M179.5 17 H185 L182.25 20 Z" fill="#62a07c"/></svg>
<svg style="left:0px;top:0px" width="1" height="1"><path d="M209.5 12.5 V18.5 H203" fill="none" stroke="#62a07c" stroke-width="1"/><path d="M209 18 C206 12 196.5 11 196.5 18 Q196.5 21 200 24 L205 28.5" fill="none" stroke="#62a07c" stroke-width="1"/><path d="M214.5 17 H220 L217.25 20 Z" fill="#62a07c"/></svg>
<svg style="left:0px;top:0px" width="1" height="1"><path d="M235 16.5 H240 M235 18.8 H240" stroke="#fff" stroke-width="1.1"/><path d="M234.8 19.5 H240.2 L237.5 22.3 Z" fill="#fff"/></svg>
<div class="t" style="left:599px;top:12px;font-size:13px;color:#c2dccb;letter-spacing:-0.07px;white-space:pre">XLPack_5_examples_D4_2.xlsm  -  Excel</div>
<div class="a" style="left:1176px;top:9px;width:68px;height:19px;background:#a0cfb4;border-radius:2px"></div>
<div class="t" style="left:1186.5px;top:12px;font-size:12px;color:#1d6b40;">サ</div>
<div class="t" style="left:1196px;top:12px;font-size:12px;color:#1d6b40;">イ</div>
<div class="t" style="left:1205.5px;top:12px;font-size:12px;color:#1d6b40;">ン</div>
<div class="t" style="left:1214px;top:12px;font-size:12px;color:#1d6b40;">イ</div>
<div class="t" style="left:1223.5px;top:12px;font-size:12px;color:#1d6b40;">ン</div>
<svg style="left:0px;top:0px" width="1" height="1"><rect x="1270.5" y="13.5" width="13" height="10" fill="none" stroke="#d5e6dc" stroke-width="1"/><path d="M1270.5 15.5 H1283.5" stroke="#d5e6dc"/><path d="M1276.5 22 V18 M1274.5 20 L1276.5 18 L1278.5 20" fill="none" stroke="#d5e6dc" stroke-width="1"/></svg>
<div class="a" style="left:1318px;top:18px;width:11px;height:1px;background:#e8f0eb"></div>
<div class="a" style="left:762px;top:212px;width:546px;height:388px;box-shadow:0 5px 16px 2px rgba(0,0,0,0.28);background:#f0f0f0;border:1px solid #5a5a5a"></div>
<div class="a" style="left:763px;top:213px;width:544px;height:30px;background:#fff"></div>
<div class="t" style="left:772px;top:222px;font-size:12px;color:#000;letter-spacing:-0.75px;">関数の引数</div>
<div class="t" style="left:1236px;top:220px;font-size:14px;color:#1a1a1a;">?</div>
<svg style="left:0px;top:0px" width="1" height="1"><path d="M1279 222 L1289 232 M1289 222 L1279 232" stroke="#000" stroke-width="1.1"/></svg>
<div class="a" style="left:770px;top:258px;width:530px;height:152px;border:1px solid #dcdcdc"></div>
<div class="a" style="left:774px;top:252px;width:52px;height:10px;background:#f0f0f0"></div>
<div class="t" style="left:776px;top:253px;font-size:12.5px;color:#000;">WZhbgv</div>
<div class="t" style="left:731px;top:280px;width:100px;text-align:right;font-size:12.5px;color:#000">Jobz</div>
<div class="a" style="left:840px;top:274px;width:198px;height:23px;background:#fff;border:1px solid #a0a0a0"></div>
<div class="a" style="left:1016px;top:274px;width:22px;height:23px;background:#e3e3e3;border:2px solid #a9a9a9"></div>
<div class="a" style="left:1019px;top:278px;width:15px;height:13px;background:#fff"></div>
<svg style="left:0px;top:0px" width="1" height="1"><path d="M1026.5 279 L1030.8 283.3 L1029.3 284 L1027.5 282.5 V286.5 H1025.5 V282.5 L1023.7 284 L1022.2 283.3 Z" fill="#000"/><rect x="1022" y="288" width="8.5" height="1.5" fill="#000"/></svg>
<div class="a" style="left:844px;top:277px;width:19px;height:15px;background:#c8c8c8"></div>
<div class="a" style="left:862px;top:277px;width:1px;height:15px;background:#000"></div>
<div class="t" style="left:844px;top:280px;font-size:12.5px;color:#000;">&quot;V&quot;</div>
<div class="t" style="left:1047px;top:281px;font-size:12.5px;color:#000;">=</div>
<div class="t" style="left:1066px;top:280px;font-size:12.5px;color:#000;">&quot;V&quot;</div>
<div class="t" style="left:731px;top:307px;width:100px;text-align:right;font-size:12.5px;color:#000">Uplo</div>
<div class="a" style="left:840px;top:301px;width:198px;height:23px;background:#fff;border:1px solid #a0a0a0"></div>
<div class="a" style="left:1016px;top:301px;width:22px;height:23px;background:#e3e3e3;border:2px solid #a9a9a9"></div>
<div class="a" style="left:1019px;top:305px;width:15px;height:13px;background:#fff"></div>
<svg style="left:0px;top:0px" width="1" height="1"><path d="M1026.5 306 L1030.8 310.3 L1029.3 311 L1027.5 309.5 V313.5 H1025.5 V309.5 L1023.7 311 L1022.2 310.3 Z" fill="#000"/><rect x="1022" y="315" width="8.5" height="1.5" fill="#000"/></svg>
<div class="t" style="left:844px;top:307px;font-size:12.5px;color:#000;">&quot;L&quot;</div>
<div class="t" style="left:1047px;top:308px;font-size:12.5px;color:#000;">=</div>
<div class="t" style="left:1066px;top:307px;font-size:12.5px;color:#000;">&quot;L&quot;</div>
<div class="t" style="left:731px;top:334px;width:100px;text-align:right;font-size:12.5px;color:#000">N</div>
<div class="a" style="left:840px;top:328px;width:198px;height:23px;background:#fff;border:1px solid #a0a0a0"></div>
<div class="a" style="left:1016px;top:328px;width:22px;height:23px;background:#e3e3e3;border:2px solid #a9a9a9"></div>
<div class="a" style="left:1019px;top:332px;width:15px;height:13px;background:#fff"></div>
<svg style="left:0px;top:0px" width="1" height="1"><path d="M1026.5 333 L1030.8 337.3 L1029.3 338 L1027.5 336.5 V340.5 H1025.5 V336.5 L1023.7 338 L1022.2 337.3 Z" fill="#000"/><rect x="1022" y="342" width="8.5" height="1.5" fill="#000"/></svg>
<div class="t" style="left:844px;top:334px;font-size:12.5px;color:#000;">3</div>
<div class="t" style="left:1047px;top:335px;font-size:12.5px;color:#000;">=</div>
<div class="t" style="left:1066px;top:334px;font-size:12.5px;color:#000;">3</div>
<div class="t" style="left:731px;top:361px;width:100px;text-align:right;font-size:12.5px;color:#000">Ka</div>
<div class="a" style="left:840px;top:355px;width:198px;height:23px;background:#fff;border:1px solid #a0a0a0"></div>
<div class="a" style="left:1016px;top:355px;width:22px;height:23px;background:#e3e3e3;border:2px solid #a9a9a9"></div>
<div class="a" style="left:1019px;top:359px;width:15px;height:13px;background:#fff"></div>
<svg style="left:0px;top:0px" width="1" height="1"><path d="M1026.5 360 L1030.8 364.3 L1029.3 365 L1027.5 363.5 V367.5 H1025.5 V363.5 L1023.7 365 L1022.2 364.3 Z" fill="#000"/><rect x="1022" y="369" width="8.5" height="1.5" fill="#000"/></svg>
<div class="t" style="left:844px;top:361px;font-size:12.5px;color:#000;">1</div>
<div class="t" style="left:1047px;top:362px;font-size:12.5px;color:#000;">=</div>
<div class="t" style="left:1066px;top:361px;font-size:12.5px;color:#000;">1</div>
<div class="t" style="left:731px;top:388px;width:100px;text-align:right;font-size:12.5px;color:#000">Kb</div>
<div class="a" style="left:840px;top:382px;width:198px;height:23px;background:#fff;border:1px solid #a0a0a0"></div>
<div class="a" style="left:1016px;top:382px;width:22px;height:23px;background:#e3e3e3;border:2px solid #a9a9a9"></div>
<div class="a" style="left:1019px;top:386px;width:15px;height:13px;background:#fff"></div>
<svg style="left:0px;top:0px" width="1" height="1"><path d="M1026.5 387 L1030.8 391.3 L1029.3 392 L1027.5 390.5 V394.5 H1025.5 V390.5 L1023.7 392 L1022.2 391.3 Z" fill="#000"/><rect x="1022" y="396" width="8.5" height="1.5" fill="#000"/></svg>
<div class="t" style="left:844px;top:388px;font-size:12.5px;color:#000;">1</div>
<div class="t" style="left:1047px;top:389px;font-size:12.5px;color:#000;">=</div>
<div class="t" style="left:1066px;top:388px;font-size:12.5px;color:#000;">1</div>
<div class="a" style="left:1273px;top:274px;width:18px;height:130px;background:#f0f0f0"></div>
<div class="a" style="left:1273px;top:274px;width:1px;height:130px;background:#fff"></div>
<svg style="left:0px;top:0px" width="1" height="1"><path d="M1279.5 285 L1283 281.5 L1286.5 285" fill="none" stroke="#505050" stroke-width="2"/><path d="M1279.5 393.5 L1283 397 L1286.5 393.5" fill="none" stroke="#505050" stroke-width="2"/></svg>
<div class="a" style="left:1274px;top:291px;width:17px;height:69px;background:#cdcdcd"></div>
<div class="t" style="left:1047px;top:420px;font-size:12.5px;color:#000;">=</div>
<div class="t" style="left:1066px;top:419px;font-size:12.5px;color:#000;letter-spacing:0.27px;">{-1.33717249804388,&quot;-0.49975...</div>
<div class="t" style="left:769px;top:437px;font-size:12px;color:#000;letter-spacing:-0.14px;">一般化固有値問題</div>
<div class="t" style="left:870px;top:438px;font-size:12.5px;color:#000;">(</div>
<div class="t" style="left:874px;top:437px;font-size:12px;color:#000;letter-spacing:-2.29px;">エルミート帯行列</div>
<div class="t" style="left:955px;top:438px;font-size:12.5px;color:#000;">)</div>
<div class="t" style="left:965px;top:438px;font-size:12.5px;color:#000;">(</div>
<div class="t" style="left:969px;top:438px;font-size:12.5px;color:#000;letter-spacing:-0.39px;">Excel</div>
<div class="t" style="left:999px;top:437px;font-size:12px;color:#000;letter-spacing:-0.50px;">複素数形式</div>
<div class="t" style="left:1058px;top:438px;font-size:12.5px;color:#000;">)</div>
<div class="t" style="left:942px;top:466px;font-size:12.5px;color:#000;letter-spacing:-0.47px;">Jobz</div>
<div class="t" style="left:976px;top:465px;font-size:12px;color:#000;">：</div>
<div class="t" style="left:985px;top:465px;font-size:12px;color:#000;letter-spacing:-1.44px;">固有ベクトル計算指定</div>
<div class="t" style="left:1097px;top:466px;font-size:12.5px;color:#000;letter-spacing:-1.20px;">(N</div>
<div class="t" style="left:1115px;top:465px;font-size:12px;color:#000;letter-spacing:-4.50px;">または</div>
<div class="t" style="left:1148px;top:466px;font-size:12.5px;color:#000;letter-spacing:-1.50px;">V)</div>
<div class="a" style="left:770px;top:522px;width:531px;height:1px;background:#dadada"></div>
<div class="t" style="left:769px;top:538px;font-size:12px;color:#000;letter-spacing:-0.50px;">数式の結果</div>
<div class="t" style="left:831px;top:539px;font-size:12.5px;color:#000;">=</div>
<div class="t" style="left:850px;top:538px;font-size:12.5px;color:#000;letter-spacing:0.08px;">-1.337172498</div>
<div class="t" style="left:769px;top:572px;font-size:12px;color:#0066cc;letter-spacing:-2.00px;">この関数のヘルプ</div>
<div class="t" style="left:851px;top:572px;font-size:12.5px;color:#0066cc;letter-spacing:-0.18px;">(H)</div>
<div class="a" style="left:769px;top:583px;width:100px;height:1px;background:#0066cc"></div>
<div class="a" style="left:1142px;top:565px;width:74px;height:25px;background:#e1e1e1;border:2px solid #0078d7"></div>
<div class="t" style="left:1142px;top:572px;font-size:12.5px;color:#000;width:74px;text-align:center;">OK</div>
<div class="a" style="left:1226px;top:565px;width:74px;height:25px;background:#e1e1e1;border:1px solid #adadad"></div>
<div class="t" style="left:1238px;top:572px;font-size:12.5px;color:#000;letter-spacing:-4.00px;">キャンセル</div>
</body></html>
